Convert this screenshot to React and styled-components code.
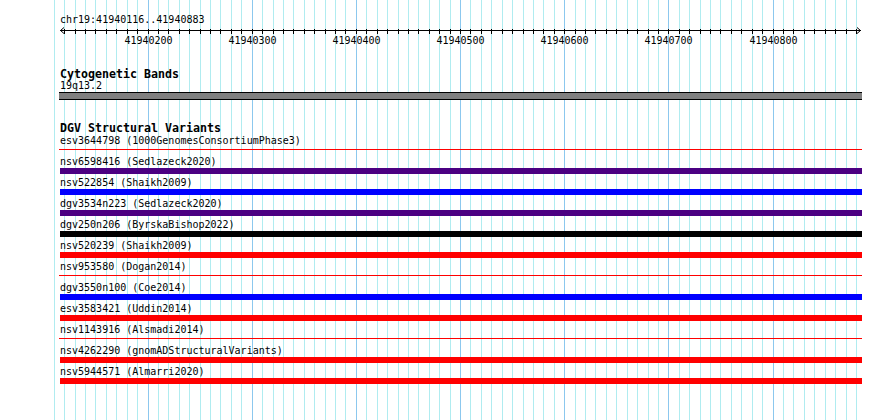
import React from "react";
import styled, { createGlobalStyle } from "styled-components";

const Global = createGlobalStyle`
  html, body { margin: 0; padding: 0; background: #ffffff; }
  body { font-family: "DejaVu Sans Mono", "Liberation Mono", monospace; }
`;

const START = 41940116;
const END = 41940883;
const toX = (bp) => Math.floor(148 + (bp - 41940200) * 1.0418);

const Page = styled.div`
  position: relative;
  width: 890px;
  height: 420px;
  overflow: hidden;
  background: #ffffff;
`;

const GridLayer = styled.svg`
  position: absolute;
  left: 0;
  top: 0;
  z-index: 0;
`;

const Content = styled.div`
  position: relative;
  z-index: 1;
  display: flex;
  flex-direction: column;
  padding: 13px 0 0 60px;
`;

const Label = styled.div`
  font-family: "DejaVu Sans Mono", "Liberation Mono", monospace;
  font-size: 10px;
  line-height: 13px;
  height: 13px;
  color: #000000;
  white-space: pre;
  margin-top: ${(p) => p.$shift || 0}px;
`;

const TrackTitle = styled.div`
  font-family: "DejaVu Sans Mono", "Liberation Mono", monospace;
  font-weight: bold;
  font-size: 11.63px;
  line-height: 12px;
  height: 12px;
  color: #000000;
  white-space: pre;
  margin-top: ${(p) => p.$top}px;
`;

const RulerSvg = styled.svg`
  display: block;
  overflow: visible;
`;

const Band = styled.div`
  box-sizing: border-box;
  margin-left: -1px;
  width: 803px;
  height: 8px;
  background: #808080;
  border-top: 1px solid #000000;
  border-bottom: 1px solid #000000;
`;

const Row = styled.div`
  display: flex;
  flex-direction: column;
  margin-bottom: 2px;
`;

const Bar = styled.div`
  width: ${(p) => (p.$thin ? 803 : 802)}px;
  height: ${(p) => (p.$thin ? 1 : 6)}px;
  margin: ${(p) => (p.$thin ? "2px 0 3px -1px" : "0")};
  background: ${(p) => p.$color};
`;

const RED = "#ff0000";
const BLUE = "#0000ff";
const INDIGO = "#4b0082";
const BLACK = "#000000";

const variants = [
  { id: "esv3644798", study: "1000GenomesConsortiumPhase3", color: RED, thin: true },
  { id: "nsv6598416", study: "Sedlazeck2020", color: INDIGO },
  { id: "nsv522854", study: "Shaikh2009", color: BLUE },
  { id: "dgv3534n223", study: "Sedlazeck2020", color: INDIGO },
  { id: "dgv250n206", study: "ByrskaBishop2022", color: BLACK },
  { id: "nsv520239", study: "Shaikh2009", color: RED },
  { id: "nsv953580", study: "Dogan2014", color: RED, thin: true },
  { id: "dgv3550n100", study: "Coe2014", color: BLUE },
  { id: "esv3583421", study: "Uddin2014", color: RED },
  { id: "nsv1143916", study: "Alsmadi2014", color: RED, thin: true },
  { id: "nsv4262290", study: "gnomADStructuralVariants", color: RED },
  { id: "nsv5944571", study: "Almarri2020", color: RED },
];

const gridBps = [];
for (let bp = 41940110; bp <= 41940880; bp += 10) gridBps.push(bp);

function Grid() {
  return (
    <GridLayer width="890" height="420" viewBox="0 0 890 420">
      {gridBps.map((bp) => {
        const x = toX(bp) + 0.5;
        const major = bp % 100 === 0;
        return (
          <line
            key={bp}
            x1={x}
            x2={x}
            y1={0}
            y2={420}
            stroke={major ? "#8cc8ee" : "#b0ecf0"}
            strokeWidth="1"
          />
        );
      })}
    </GridLayer>
  );
}

function Ruler() {
  const y = 4.5;
  const ticks = gridBps.filter((bp) => bp > START && bp < END);
  const majors = ticks.filter((bp) => bp % 100 === 0);
  return (
    <RulerSvg width="830" height="22" viewBox="0 0 830 22">
      <line x1={0} x2={801} y1={y} y2={y} stroke="#000" strokeWidth="1" />
      <polyline points={`4,1.5 0.5,${y} 4,7.5`} fill="none" stroke="#000" strokeWidth="1" />
      <polyline points={`797,1.5 800.5,${y} 797,7.5`} fill="none" stroke="#000" strokeWidth="1" />
      {ticks.map((bp) => {
        const x = toX(bp) - 60 + 0.5;
        return <line key={bp} x1={x} x2={x} y1={3} y2={8} stroke="#000" strokeWidth="1" />;
      })}
      {majors.map((bp) => (
        <text
          key={bp}
          x={toX(bp) - 60 + 0.5}
          y={18}
          textAnchor="middle"
          fontFamily="DejaVu Sans Mono, Liberation Mono, monospace"
          fontSize="10"
          fill="#000"
        >
          {bp}
        </text>
      ))}
    </RulerSvg>
  );
}

export default function App() {
  return (
    <>
      <Global />
      <Page>
        <Grid />
        <Content>
          <Label>{`chr19:${START}..${END}`}</Label>
          <Ruler />
          <TrackTitle $top={20}>Cytogenetic Bands</TrackTitle>
          <Label $shift={-1}>19q13.2</Label>
          <Band />
          <TrackTitle $top={22}>DGV Structural Variants</TrackTitle>
          {variants.map((v) => (
            <Row key={v.id}>
              <Label>{`${v.id} (${v.study})`}</Label>
              <Bar $color={v.color} $thin={v.thin} />
            </Row>
          ))}
        </Content>
      </Page>
    </>
  );
}
